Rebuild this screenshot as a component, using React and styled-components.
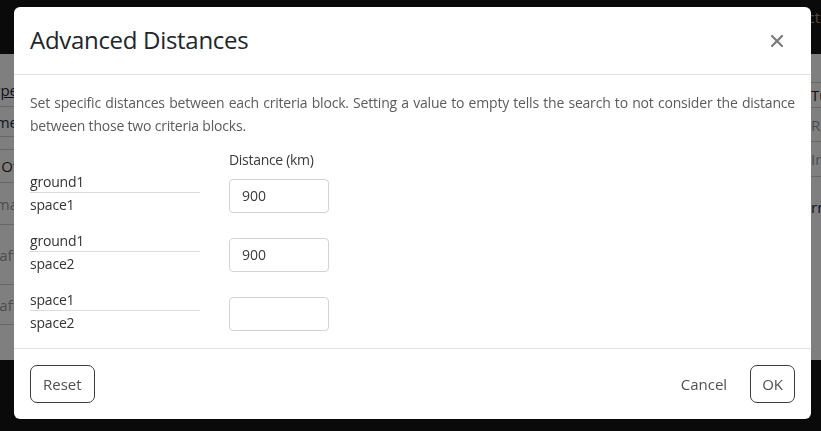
import React from 'react';
import styled, { createGlobalStyle } from 'styled-components';

const GlobalStyle = createGlobalStyle`
  html, body {
    margin: 0;
    padding: 0;
    height: 100%;
    overflow: hidden;
  }
  body {
    font-family: "Open Sans", "Noto Sans", sans-serif;
    background: #141414;
  }
`;

/* ---- page underneath the modal ---- */

const Page = styled.div`
  height: 100vh;
  display: flex;
  flex-direction: column;
`;

const Navbar = styled.div`
  height: 54px;
  background: #141414;
  display: flex;
  justify-content: flex-end;
  align-items: flex-start;
  padding-top: 7px;
  box-sizing: border-box;
  overflow: hidden;
`;

const NavLink = styled.span`
  font-size: 15px;
  color: #b49474;
  margin-right: 1px;
`;

const Main = styled.div`
  height: 306px;
  background: #fff;
  display: flex;
  justify-content: space-between;
`;

const SideTable = styled.div`
  width: ${p => p.$w}px;
  display: flex;
  flex-direction: column;
  overflow: hidden;
`;

const SideCell = styled.div`
  height: ${p => p.$h}px;
  box-sizing: border-box;
  border-bottom: ${p => (p.$line ? '1px solid #cfcfcf' : 'none')};
  display: flex;
  align-items: ${p => p.$align || 'center'};
  justify-content: ${p => (p.$right ? 'flex-end' : 'flex-start')};
  padding-bottom: ${p => p.$pb || 0}px;
  font-size: 15px;
  white-space: nowrap;
  color: ${p => p.$color || '#222'};
  text-decoration: ${p => (p.$under ? 'underline' : 'none')};
`;

const Footer = styled.div`
  flex: 1;
  background: #141414;
`;

const Backdrop = styled.div`
  position: fixed;
  inset: 0;
  background: rgba(0, 0, 0, 0.5);
`;

/* ---- modal ---- */

const Modal = styled.div`
  position: fixed;
  top: 7px;
  left: 14px;
  width: 797px;
  background: #fff;
  border-radius: 6px;
  display: flex;
  flex-direction: column;
  color: #212529;
`;

const Header = styled.div`
  height: 68px;
  box-sizing: border-box;
  padding: 0 16px;
  display: flex;
  align-items: center;
  justify-content: space-between;
  border-bottom: 1px solid #dee2e6;
`;

const Title = styled.h5`
  margin: 0;
  font-size: 24px;
  font-weight: 500;
  color: #212529;
  letter-spacing: -0.3px;
  padding-bottom: 2px;
`;

const Close = styled.button`
  border: 0;
  background: transparent;
  padding: 0;
  margin-right: 11px;
  width: 14px;
  height: 14px;
  display: flex;
  align-items: center;
  justify-content: center;
  cursor: pointer;
`;

const Body = styled.div`
  padding: 16px 16px 15px;
  border-bottom: 1px solid #dee2e6;
`;

const Intro = styled.p`
  margin: 0 0 13px;
  font-size: 14px;
  line-height: 23px;
  letter-spacing: -0.2px;
  color: #5b5b5b;
  text-align: justify;
`;

const Grid = styled.div`
  display: grid;
  grid-template-columns: 170px 100px;
  column-gap: 29px;
  row-gap: 15px;
  align-items: center;
`;

const ColHead = styled.div`
  grid-column: 2;
  font-size: 14px;
  line-height: 20px;
  letter-spacing: -0.3px;
  color: #3a3a3a;
  margin-bottom: -14px;
`;

const Pair = styled.div`
  display: flex;
  flex-direction: column;
`;

const PairName = styled.div`
  font-size: 14px;
  line-height: 21px;
  letter-spacing: -0.2px;
  color: #333;
  border-bottom: ${p => (p.$top ? '1px solid #dcdcdc' : 'none')};
  padding-top: ${p => (p.$top ? 0 : 1)}px;
`;

const DistInput = styled.input`
  width: 100px;
  height: 34px;
  box-sizing: border-box;
  margin-top: 5px;
  border: 1px solid #ced4da;
  border-radius: 4px;
  padding: 0 12px;
  font-family: inherit;
  font-size: 14px;
  color: #3a3a3a;
  outline: none;
`;

const FooterBar = styled.div`
  padding: 16px;
  display: flex;
  align-items: center;
  justify-content: space-between;
`;

const Actions = styled.div`
  display: flex;
  align-items: center;
  gap: 10px;
`;

const Button = styled.button`
  height: 38px;
  box-sizing: border-box;
  padding: 0 ${p => (p.$pad || 12)}px;
  font-family: inherit;
  font-size: 15px;
  color: #505050;
  background: #fff;
  border: ${p => (p.$plain ? '1px solid transparent' : '1px solid #3c3c3c')};
  border-radius: 7px;
  cursor: pointer;
`;

const rowsLeft = [
  { text: 'Type', h: 53, line: true, under: true, align: 'flex-end', pb: 6, color: '#1a1a3a' },
  { text: 'Name', h: 30, line: true, color: '#1a2a55' },
  { text: '', h: 13, line: true },
  { text: 'Of', h: 33, line: true, color: '#3a1a1a' },
  { text: 'Ama', h: 42, line: true, color: '#9a9a9a' },
  { text: 'Draft', h: 60, line: true, color: '#9a9a9a' },
  { text: 'Draft', h: 40, line: true, color: '#9a9a9a' },
];

const rowsRight = [
  { text: '', h: 29, line: true },
  { text: 'Tu', h: 25, line: true, color: '#3a1a1a' },
  { text: 'Ra', h: 34, line: true, color: '#9a9a9a' },
  { text: 'Inp', h: 35, line: true, color: '#9a9a9a' },
  { text: 'rn', h: 60, color: '#1a2a55' },
];

const pairs = [
  { a: 'ground1', b: 'space1', value: '900' },
  { a: 'ground1', b: 'space2', value: '900' },
  { a: 'space1', b: 'space2', value: '' },
];

export default function App() {
  return (
    <>
      <GlobalStyle />
      <Page>
        <Navbar>
          <NavLink>Contact</NavLink>
        </Navbar>
        <Main>
          <SideTable $w={18}>
            {rowsLeft.map((r, i) => (
              <SideCell key={i} $h={r.h} $line={r.line} $right
                $under={r.under} $color={r.color} $align={r.align} $pb={r.pb}>
                {r.text}
              </SideCell>
            ))}
          </SideTable>
          <SideTable $w={10}>
            {rowsRight.map((r, i) => (
              <SideCell key={i} $h={r.h} $line={r.line} $color={r.color}>
                {r.text}
              </SideCell>
            ))}
          </SideTable>
        </Main>
        <Footer />
      </Page>
      <Backdrop />

      <Modal>
        <Header>
          <Title>Advanced Distances</Title>
          <Close aria-label="Close">
            <svg width="12" height="12" viewBox="0 0 12 12">
              <path d="M1 1 L11 11 M11 1 L1 11" stroke="#7a7a7a" strokeWidth="2.2" strokeLinecap="square" />
            </svg>
          </Close>
        </Header>
        <Body>
          <Intro>
            Set specific distances between each criteria block. Setting a value to empty tells the
            search to not consider the distance between those two criteria blocks.
          </Intro>
          <Grid>
            <ColHead>Distance (km)</ColHead>
            {pairs.map((p, i) => (
              <React.Fragment key={i}>
                <Pair>
                  <PairName $top>{p.a}</PairName>
                  <PairName>{p.b}</PairName>
                </Pair>
                <DistInput defaultValue={p.value} />
              </React.Fragment>
            ))}
          </Grid>
        </Body>
        <FooterBar>
          <Button>Reset</Button>
          <Actions>
            <Button $plain>Cancel</Button>
            <Button $pad={11}>OK</Button>
          </Actions>
        </FooterBar>
      </Modal>
    </>
  );
}
